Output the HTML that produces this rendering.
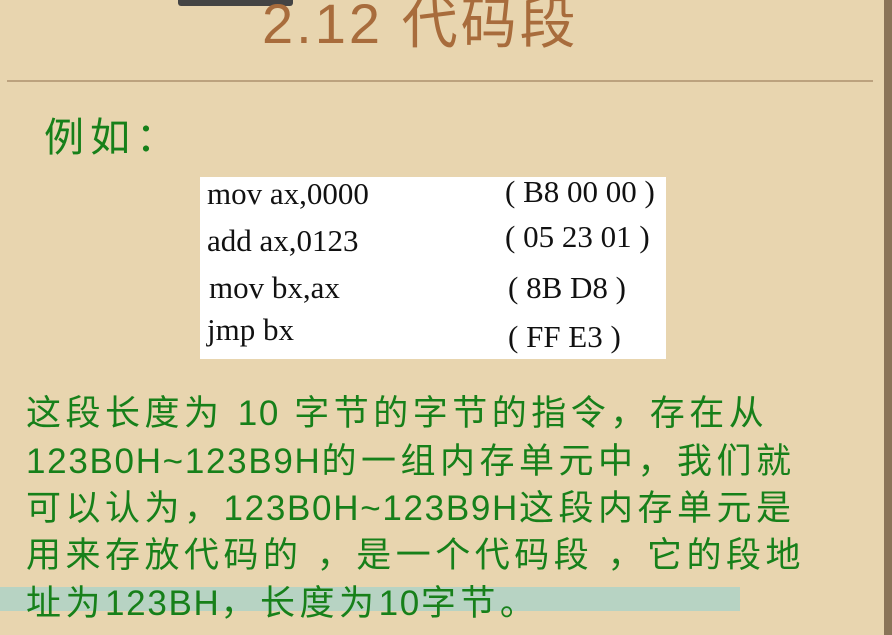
<!DOCTYPE html>
<html><head><meta charset="utf-8"><style>
*{margin:0;padding:0}
body{width:892px;height:635px;background:#e8d5af;position:relative;overflow:hidden;font-family:"Liberation Sans","Noto Sans CJK SC",sans-serif}
.a{position:absolute;white-space:nowrap}
.t{font-family:"Liberation Serif",serif;font-size:31px;color:#111;line-height:1}
.g{color:#17801a;font-size:35px;line-height:1;left:26px;letter-spacing:4.5px}
.g b{font-weight:normal;letter-spacing:1.7px}
</style></head><body>
<div class="a" style="left:884px;top:0;width:8px;height:635px;background:#8a7458"></div>
<div class="a" style="left:178px;top:0;width:115px;height:6px;background:#444;border-radius:0 0 3px 3px"></div>
<div class="a" style="left:262px;top:-4px;font-size:56px;color:#a86c3c;line-height:1;letter-spacing:3px"><span style="letter-spacing:3px">2.12 </span>代码段</div>
<div class="a" style="left:7px;top:80px;width:866px;height:2px;background:#bca27e"></div>
<div class="a" style="left:44px;top:118px;font-size:40px;color:#17801a;line-height:1;letter-spacing:6px">例如：</div>
<div class="a" style="left:200px;top:177px;width:466px;height:182px;background:#fff"></div>
<div class="a t" style="left:207px;top:178px">mov ax,0000</div>
<div class="a t" style="left:207px;top:225px">add ax,0123</div>
<div class="a t" style="left:209px;top:272px">mov bx,ax</div>
<div class="a t" style="left:207px;top:314px">jmp bx</div>
<div class="a t" style="left:505px;top:176px">( B8 00 00 )</div>
<div class="a t" style="left:505px;top:221px">( 05 23 01 )</div>
<div class="a t" style="left:508px;top:272px">( 8B D8 )</div>
<div class="a t" style="left:508px;top:321px">( FF E3 )</div>
<div class="a" style="left:0;top:587px;width:740px;height:24px;background:#b7d3c3"></div>
<div class="a g" style="top:396px">这段长度为 <b>10</b> 字节的字节的指令，存在从</div>
<div class="a g" style="top:444px"><b>123B0H~123B9H</b>的一组内存单元中，我们就</div>
<div class="a g" style="top:491px">可以认为，<b>123B0H~123B9H</b>这段内存单元是</div>
<div class="a g" style="top:538px">用来存放代码的 ，是一个代码段 ，它的段地</div>
<div class="a g" style="top:586px">址为<b>123BH</b>，长度为<b>10</b>字节。</div>
</body></html>
